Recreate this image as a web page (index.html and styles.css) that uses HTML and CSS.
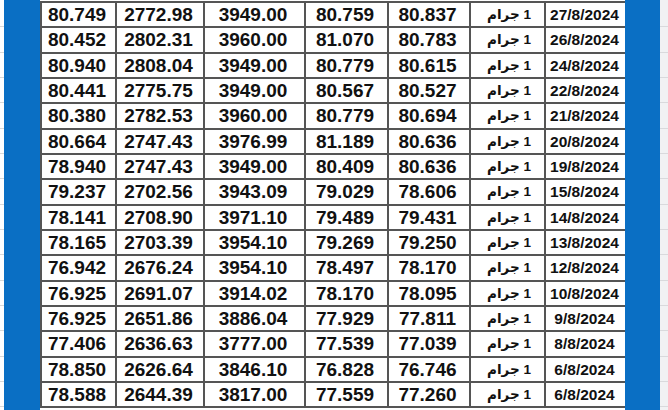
FILE: index.html
```html
<!DOCTYPE html>
<html lang="ar">
<head>
<meta charset="utf-8">
<link rel="stylesheet" href="styles.css">
</head>
<body>
<div class="page">
  <div class="sheet-left"></div>
  <div class="band band-left"></div>
  <div class="table-wrap">
    <div class="grid">
      <div class="c">80.749</div><div class="c">2772.98</div><div class="c">3949.00</div><div class="c">80.759</div><div class="c">80.837</div><div class="c ar">1 جرام</div><div class="c d">27/8/2024</div>
      <div class="c">80.452</div><div class="c">2802.31</div><div class="c">3960.00</div><div class="c">81.070</div><div class="c">80.783</div><div class="c ar">1 جرام</div><div class="c d">26/8/2024</div>
      <div class="c">80.940</div><div class="c">2808.04</div><div class="c">3949.00</div><div class="c">80.779</div><div class="c">80.615</div><div class="c ar">1 جرام</div><div class="c d">24/8/2024</div>
      <div class="c">80.441</div><div class="c">2775.75</div><div class="c">3949.00</div><div class="c">80.567</div><div class="c">80.527</div><div class="c ar">1 جرام</div><div class="c d">22/8/2024</div>
      <div class="c">80.380</div><div class="c">2782.53</div><div class="c">3960.00</div><div class="c">80.779</div><div class="c">80.694</div><div class="c ar">1 جرام</div><div class="c d">21/8/2024</div>
      <div class="c">80.664</div><div class="c">2747.43</div><div class="c">3976.99</div><div class="c">81.189</div><div class="c">80.636</div><div class="c ar">1 جرام</div><div class="c d">20/8/2024</div>
      <div class="c">78.940</div><div class="c">2747.43</div><div class="c">3949.00</div><div class="c">80.409</div><div class="c">80.636</div><div class="c ar">1 جرام</div><div class="c d">19/8/2024</div>
      <div class="c">79.237</div><div class="c">2702.56</div><div class="c">3943.09</div><div class="c">79.029</div><div class="c">78.606</div><div class="c ar">1 جرام</div><div class="c d">15/8/2024</div>
      <div class="c">78.141</div><div class="c">2708.90</div><div class="c">3971.10</div><div class="c">79.489</div><div class="c">79.431</div><div class="c ar">1 جرام</div><div class="c d">14/8/2024</div>
      <div class="c">78.165</div><div class="c">2703.39</div><div class="c">3954.10</div><div class="c">79.269</div><div class="c">79.250</div><div class="c ar">1 جرام</div><div class="c d">13/8/2024</div>
      <div class="c">76.942</div><div class="c">2676.24</div><div class="c">3954.10</div><div class="c">78.497</div><div class="c">78.170</div><div class="c ar">1 جرام</div><div class="c d">12/8/2024</div>
      <div class="c">76.925</div><div class="c">2691.07</div><div class="c">3914.02</div><div class="c">78.170</div><div class="c">78.095</div><div class="c ar">1 جرام</div><div class="c d">10/8/2024</div>
      <div class="c">76.925</div><div class="c">2651.86</div><div class="c">3886.04</div><div class="c">77.929</div><div class="c">77.811</div><div class="c ar">1 جرام</div><div class="c d">9/8/2024</div>
      <div class="c">77.406</div><div class="c">2636.63</div><div class="c">3777.00</div><div class="c">77.539</div><div class="c">77.039</div><div class="c ar">1 جرام</div><div class="c d">8/8/2024</div>
      <div class="c">78.850</div><div class="c">2626.64</div><div class="c">3846.10</div><div class="c">76.828</div><div class="c">76.746</div><div class="c ar">1 جرام</div><div class="c d">6/8/2024</div>
      <div class="c">78.588</div><div class="c">2644.39</div><div class="c">3817.00</div><div class="c">77.559</div><div class="c">77.260</div><div class="c ar">1 جرام</div><div class="c d">6/8/2024</div>
    </div>
  </div>
  <div class="band band-right"></div>
  <div class="sheet-right"></div>
</div>
</body>
</html>
```
FILE: styles.css
```css
html, body {
  margin: 0;
  padding: 0;
  background: #ffffff;
}
.page {
  display: flex;
  width: 668px;
  height: 410px;
  overflow: hidden;
}
.sheet-left {
  width: 4px;
  background: repeating-linear-gradient(to bottom, #ffffff 0, #ffffff 24.33px, #d9d9d9 24.33px, #d9d9d9 25.33px);
  background-position: 0 2px;
}
.sheet-right {
  width: 8px;
  background: repeating-linear-gradient(to bottom, #f1f1f3 0, #f1f1f3 24.33px, #d9d9dc 24.33px, #d9d9dc 25.33px);
  background-position: 0 2px;
}
.band {
  background: #0a6fc4;
}
.band-left {
  width: 36px;
}
.band-right {
  width: 35px;
}
.table-wrap {
  width: 585px;
  background: #ffffff;
  padding-top: 1px;
}
.grid {
  display: grid;
  grid-template-columns: 73px 86px 99px 81px 80px 73px 79px;
  grid-auto-rows: 23.33px;
  gap: 2px;
  padding: 2px;
  background: #555555;
}
.c {
  background: #ffffff;
  display: flex;
  align-items: center;
  justify-content: center;
  font-family: "Liberation Sans", Arial, sans-serif;
  font-weight: bold;
  font-size: 19px;
  color: #111111;
  line-height: 1;
  padding-right: 3px;
}
.ar {
  direction: rtl;
  font-family: "Liberation Sans", "DejaVu Sans", sans-serif;
  font-size: 13.5px;
  padding-right: 0;
  padding-left: 3px;
}
.d {
  font-size: 15.5px;
  padding-right: 2px;
}
```
